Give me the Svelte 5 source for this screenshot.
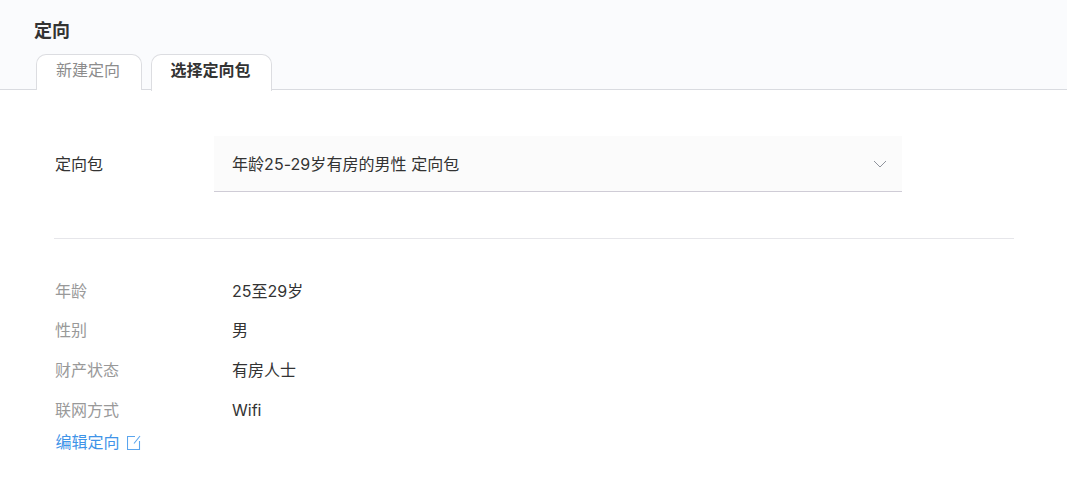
<div class="page">
  <header class="head">
    <h1>定向</h1>
    <div class="tabs">
      <div class="tab">新建定向</div>
      <div class="tab active">选择定向包</div>
    </div>
  </header>
  <main class="body">
    <div class="field">
      <span class="field-label">定向包</span>
      <div class="select">
        <span class="value">年龄25-29岁有房的男性 定向包</span>
        <svg class="chevron" width="14" height="8" viewBox="0 0 14 8" fill="none"><path d="M1 1l6 6 6-6" stroke="#8f939c" stroke-width="1"/></svg>
      </div>
    </div>
    <div class="rule"></div>
    <dl class="list">
      {#each rows as [k, v]}
        <div class="row"><dt>{k}</dt><dd>{v}</dd></div>
      {/each}
    </dl>
    <div class="edit">
      <span>编辑定向</span>
      <svg width="14" height="15" viewBox="0 0 14 15" fill="none" stroke="#5aa5ee" stroke-width="1.1">
        <path d="M8 1.5H.5v13h12V6"/>
        <path d="M13 1L7 8.5"/>
      </svg>
    </div>
  </main>
</div>

<script>
  const rows = [
    ['年龄', '25至29岁'],
    ['性别', '男'],
    ['财产状态', '有房人士'],
    ['联网方式', 'Wifi'],
  ];
</script>

<style>
  :global(body) {
    margin: 0;
    background: #fff;
  }
  .page {
    font-family: "Inter", "Noto Sans CJK SC", sans-serif;
    color: #333;
    height: 503px;
    overflow: hidden;
  }
  .head {
    background: #fafbfd;
    height: 90px;
    box-sizing: border-box;
    border-bottom: 1px solid #d9dbe0;
    padding: 20px 0 0 34px;
  }
  h1 {
    margin: 0;
    font-size: 18px;
    line-height: 22px;
    font-weight: 700;
    color: #333;
  }
  .tabs {
    display: flex;
    gap: 9px;
    margin: 12px 0 0 2px;
  }
  .tab {
    height: 36px;
    box-sizing: border-box;
    width: 106px;
    padding-right: 2px;
    border: 1px solid #dcdde1;
    border-bottom: 0;
    border-radius: 10px 10px 0 0;
    background: #fff;
    color: #8c8c8c;
    font-size: 16px;
    line-height: 30px;
    text-align: center;
  }
  .tab.active {
    width: 121px;
    height: 37px;
    color: #333;
    font-weight: 700;
  }
  .body {
    padding: 46px 53px 0 54px;
  }
  .field {
    display: flex;
    align-items: center;
    font-size: 16px;
  }
  .field-label {
    width: 159px;
    padding-left: 1px;
    margin-bottom: 3px;
  }
  .select {
    width: 688px;
    height: 56px;
    box-sizing: border-box;
    background: #fbfbfb;
    border-bottom: 1px solid #cfccd6;
    padding: 0 15px 2px 18px;
    display: flex;
    align-items: center;
    justify-content: space-between;
  }
  .value {
    letter-spacing: 0.05px;
  }
  .chevron {
    margin-top: 2px;
  }
  .rule {
    height: 1px;
    background: #e6e6ea;
    margin-top: 46px;
  }
  .list {
    margin: 32px 0 0;
    padding-left: 1px;
    font-size: 16px;
  }
  .row {
    display: flex;
    height: 40px;
    line-height: 40px;
  }
  .row:first-child {
    height: 39px;
  }
  dt {
    width: 177px;
    color: #999;
  }
  dd {
    margin: 0;
    color: #333;
  }
  .edit {
    display: flex;
    align-items: center;
    gap: 7px;
    color: #3f94e8;
    font-size: 16px;
    line-height: 24px;
    margin: 0 0 0 1.5px;
  }
</style>
